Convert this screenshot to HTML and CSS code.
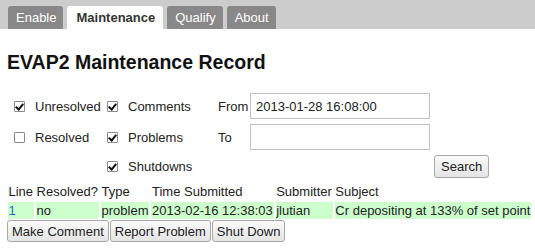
FILE: index.html
```html
<!DOCTYPE html>
<html>
<head>
<meta charset="utf-8">
<link rel="stylesheet" href="styles.css">
</head>
<body>
<div class="tabbar">
  <span class="tab">Enable</span>
  <span class="tab active">Maintenance</span>
  <span class="tab">Qualify</span>
  <span class="tab">About</span>
</div>
<h1 class="title">EVAP2 Maintenance Record</h1>
<form class="filters">
  <label class="chk r1 c1"><input type="checkbox" checked><span>Unresolved</span></label>
  <label class="chk r2 c1"><input type="checkbox"><span>Resolved</span></label>
  <label class="chk r1 c2"><input type="checkbox" checked><span>Comments</span></label>
  <label class="chk r2 c2"><input type="checkbox" checked><span>Problems</span></label>
  <label class="chk r3 c2"><input type="checkbox" checked><span>Shutdowns</span></label>
  <span class="lbl r1 c3">From</span>
  <input class="txt r1 c4" type="text" value="2013-01-28 16:08:00">
  <span class="lbl r2 c3">To</span>
  <input class="txt r2 c4" type="text" value="">
  <button type="button" class="btn r3 c5">Search</button>
</form>
<table class="records">
  <thead>
    <tr><th>Line</th><th>Resolved?</th><th>Type</th><th>Time Submitted</th><th>Submitter</th><th>Subject</th></tr>
  </thead>
  <tbody>
    <tr class="row"><td><a class="link" href="#">1</a></td><td>no</td><td>problem</td><td>2013-02-16 12:38:03</td><td>jlutian</td><td>Cr depositing at 133% of set point</td></tr>
  </tbody>
</table>
<div class="actions">
  <button type="button" class="btn">Make Comment</button>
  <button type="button" class="btn">Report Problem</button>
  <button type="button" class="btn">Shut Down</button>
</div>
</body>
</html>
```
FILE: styles.css
```css
* { box-sizing: border-box; }
body {
  margin: 0;
  font-family: "Liberation Sans", Arial, sans-serif;
  font-size: 13px;
  color: #222;
  background: #fff;
}
.tabbar {
  background: #cccccc;
  height: 29px;
  padding: 6px 0 0 8px;
  display: flex;
  gap: 4px;
}
.tab {
  height: 23px;
  line-height: 23px;
  padding: 0 7px 0 8px;
  background: #888888;
  color: #fff;
  border-radius: 3px 3px 0 0;
  font-size: 13px;
}
.tab.active {
  background: #fff;
  color: #333;
  font-weight: bold;
  padding: 0 8px 0 9px;
}
.title {
  margin: 22px 0 0 7px;
  font-size: 19.5px;
  line-height: 23px;
  font-weight: bold;
  color: #111;
}
.filters {
  display: grid;
  grid-template-columns: 93px 109px 34px 180px auto;
  grid-template-rows: 26px 26px 23px;
  column-gap: 0;
  row-gap: 5px;
  margin: 19px 0 0 14px;
  align-items: center;
}
.r1 { grid-row: 1; }
.r2 { grid-row: 2; }
.r3 { grid-row: 3; }
.c1 { grid-column: 1; }
.c2 { grid-column: 2; }
.c3 { grid-column: 3; }
.c4 { grid-column: 4; }
.c5 { grid-column: 5; justify-self: start; margin-left: 4px; }
.chk {
  display: flex;
  align-items: center;
  gap: 10px;
  white-space: nowrap;
}
.chk input {
  -webkit-appearance: none;
  appearance: none;
  margin: 0;
  width: 11px;
  height: 11px;
  border: 1px solid #8a8a8a;
  border-radius: 1px;
  background: #fff;
  position: relative;
  flex: none;
}
.chk input:checked::after {
  content: "";
  position: absolute;
  left: 2px;
  top: 0px;
  width: 3px;
  height: 6px;
  border: solid #111;
  border-width: 0 2px 2px 0;
  transform: rotate(40deg);
}
.lbl { padding-left: 2px; }
.txt {
  width: 180px;
  height: 26px;
  border: 1px solid #c2c2c2;
  padding: 0 5px;
  font-family: "Liberation Sans", Arial, sans-serif;
  font-size: 13px;
  color: #222;
  background: #fff;
  outline: none;
}
.btn {
  height: 22px;
  padding: 0 4px;
  border: 1px solid #a8a8a8;
  border-radius: 3px;
  background: linear-gradient(#fbfbfb, #e4e4e4);
  font-family: "Liberation Sans", Arial, sans-serif;
  font-size: 13px;
  color: #222;
}
.filters .btn { height: 23px; padding: 0 6px; }
.records {
  border-spacing: 2px;
  margin: 3px 0 0 6px;
  white-space: nowrap;
}
.records th {
  font-weight: normal;
  text-align: left;
  padding: 0 1px 0 0.5px;
  line-height: 17px;
}
.records td {
  padding: 0 1px 0 0.5px;
  line-height: 17px;
  background: #ccffcc;
}
.link { color: #1a6fc0; text-decoration: none; }
.actions {
  display: flex;
  gap: 1px;
  margin: -1px 0 0 7px;
}
```
